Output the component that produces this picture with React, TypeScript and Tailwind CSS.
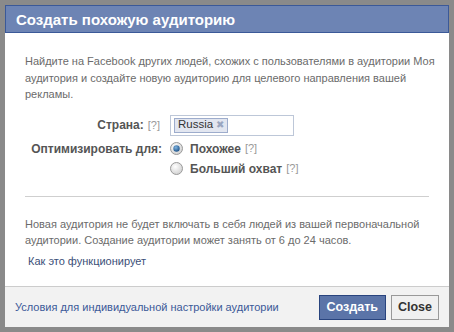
import React from "react";

const font = { fontFamily: '"Liberation Sans", Arial, sans-serif' };

function Radio({ checked }: { checked: boolean }) {
  return (
    <svg width="13" height="13" viewBox="0 0 13 13" className="shrink-0">
      <defs>
        <radialGradient id={checked ? "rg1" : "rg2"} cx="0.4" cy="0.35" r="0.7">
          <stop offset="0" stopColor="#ffffff" />
          <stop offset="1" stopColor="#cfcfcf" />
        </radialGradient>
        <radialGradient id="dot" cx="0.4" cy="0.35" r="0.7">
          <stop offset="0" stopColor="#7fb4e0" />
          <stop offset="1" stopColor="#1a4f86" />
        </radialGradient>
      </defs>
      <circle cx="6.5" cy="6.5" r="6" fill={`url(#${checked ? "rg1" : "rg2"})`} stroke="#9a9a9a" />
      {checked && <circle cx="6.5" cy="6.5" r="3.2" fill="url(#dot)" />}
    </svg>
  );
}

export default function App() {
  return (
    <div className="w-[454px] h-[332px] bg-[#8a8a8a] p-[5px]" style={font}>
      <div className="flex flex-col h-full bg-white">
        <div className="h-[28px] bg-[#6d84b4] border border-[#3b5998] flex items-center px-[10px]">
          <span className="text-white font-bold text-[15px] leading-none">Создать похожую аудиторию</span>
        </div>
        <div className="flex-1 pl-[20px] pr-[10px] pt-[20px] text-[11px] text-[#6b6b6b]">
          <p className="leading-[16.5px]">
            Найдите на Facebook других людей, схожих с пользователями в аудитории Моя аудитория и создайте новую аудиторию для целевого направления вашей рекламы.
          </p>
          <div className="mt-[12px] grid grid-cols-[137px_1fr] gap-x-[8px] items-center">
            <div className="flex justify-end items-center gap-[4px] pr-[2px]">
              <span className="font-bold text-[#555] text-[12px]">Страна:</span>
              <span className="text-[#999]">[?]</span>
            </div>
            <div className="w-[124px] h-[21px] border border-[#bdc7d8] flex items-center px-[3px]">
              <span className="h-[15px] flex items-center gap-[3px] bg-[#e2e6f0] border border-[#9daccc] px-[3px] text-[#333] text-[11.5px] leading-none">
                Russia <span className="text-[#9aa6c0] text-[10px]">✖</span>
              </span>
            </div>
            <div className="flex justify-end mt-[4px]">
              <span className="font-bold text-[#555] text-[12px] whitespace-nowrap">Оптимизировать для:</span>
            </div>
            <div className="flex items-center gap-[7px] mt-[4px]">
              <Radio checked />
              <span className="font-bold text-[#555] text-[12px]">Похожее</span>
              <span className="text-[#999] -ml-[3px]">[?]</span>
            </div>
            <div />
            <div className="flex items-center gap-[7px] mt-[2px]">
              <Radio checked={false} />
              <span className="font-bold text-[#555] text-[12px]">Больший охват</span>
              <span className="text-[#999] -ml-[3px]">[?]</span>
            </div>
          </div>
          <div className="mt-[18px] mr-[10px] h-px bg-[#cfcfcf]" />
          <p className="mt-[19px] leading-[16.5px]">
            Новая аудитория не будет включать в себя людей из вашей первоначальной аудитории. Создание аудитории может занять от 6 до 24 часов.
          </p>
          <p className="mt-[4px] ml-[3px] text-[#3b4f78]">Как это функционирует</p>
        </div>
        <div className="h-[41px] bg-[#f2f2f2] border-t border-[#cccccc] flex items-center justify-between pl-[10px] pr-[10px]">
          <span className="text-[11px] text-[#3b5998]">Условия для индивидуальной настройки аудитории</span>
          <div className="flex gap-[5px]">
            <button className="h-[25px] px-[7px] bg-[#5b74a8] border border-[#29447e] text-white font-bold text-[12.5px]">Создать</button>
            <button className="h-[25px] px-[6px] bg-[#f0f0f0] border border-[#999] text-[#333] font-bold text-[12.5px]">Close</button>
          </div>
        </div>
      </div>
    </div>
  );
}
